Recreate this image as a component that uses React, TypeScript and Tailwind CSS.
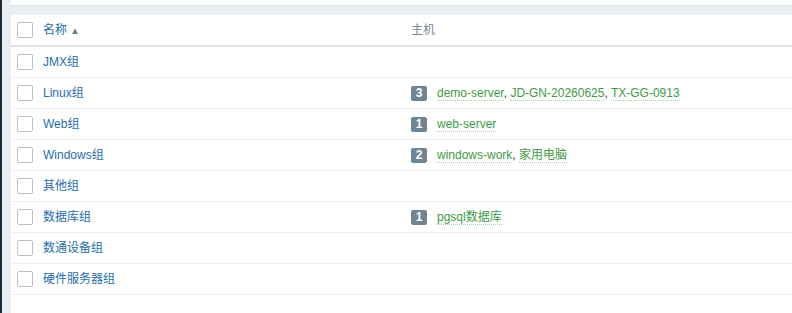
import React from "react";

type Row = {
  name: string;
  hosts: string[];
};

const rows: Row[] = [
  { name: "JMX组", hosts: [] },
  { name: "Linux组", hosts: ["demo-server", "JD-GN-20260625", "TX-GG-0913"] },
  { name: "Web组", hosts: ["web-server"] },
  { name: "Windows组", hosts: ["windows-work", "家用电脑"] },
  { name: "其他组", hosts: [] },
  { name: "数据库组", hosts: ["pgsql数据库"] },
  { name: "数通设备组", hosts: [] },
  { name: "硬件服务器组", hosts: [] },
];

const Checkbox = () => (
  <span className="block w-4 h-4 rounded-[2px] border border-[#b7c2c9] bg-white" />
);

const App: React.FC = () => {
  return (
    <div
      className="flex w-[792px] h-[313px] overflow-hidden bg-[#ebeef0] text-[12px]"
      style={{ fontFamily: '"Liberation Sans", Arial, "Noto Sans CJK SC", sans-serif' }}
    >
      <div className="w-[2px] shrink-0 bg-[#1d2b33]" />
      <div className="flex-1 flex flex-col pl-[9px]">
        <div className="h-[6px] bg-[#fcfdfd] border-b border-[#dfe4e7]" />
        <div className="mt-[9px] flex-1 bg-white">
          <div className="flex items-center h-[32px] border-b-2 border-[#dfe4e7]">
            <div className="w-[32px] pl-[6px] shrink-0">
              <Checkbox />
            </div>
            <div className="w-[368px] shrink-0 flex items-center text-[#1f6eaa]">
              名称
              <span className="ml-[3px] text-[10px] text-[#6d7f8b]">▲</span>
            </div>
            <div className="text-[#7d8b95]">主机</div>
          </div>
          {rows.map((row) => (
            <div
              key={row.name}
              className="flex items-center h-[31px] border-b border-[#ebeef0]"
            >
              <div className="w-[32px] pl-[6px] shrink-0">
                <Checkbox />
              </div>
              <div className="w-[368px] shrink-0 text-[#1f6eaa]">{row.name}</div>
              {row.hosts.length > 0 && (
                <div className="flex items-center">
                  <span className="inline-flex items-center justify-center w-[16px] h-[15px] rounded-[2px] bg-[#6f8594] text-white font-bold text-[12px] leading-none">
                    {row.hosts.length}
                  </span>
                  <span className="ml-[10px] text-[#3c3c3c]">
                    {row.hosts.map((h, i) => (
                      <React.Fragment key={h}>
                        {i > 0 && ", "}
                        <span className="text-[#3d9b46] border-b border-dotted border-[#a9d2ac]">
                          {h}
                        </span>
                      </React.Fragment>
                    ))}
                  </span>
                </div>
              )}
            </div>
          ))}
        </div>
      </div>
    </div>
  );
};

export default App;
